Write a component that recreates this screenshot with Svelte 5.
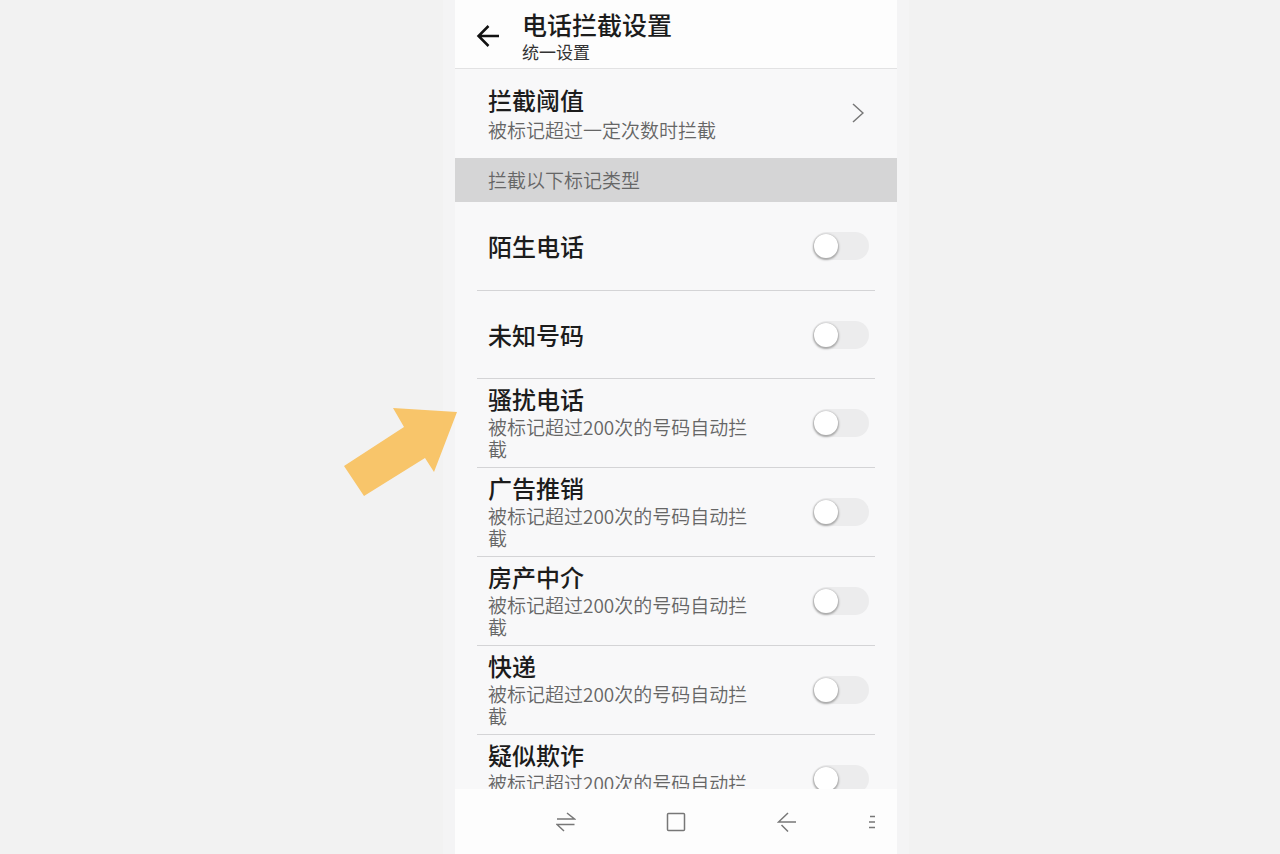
<script lang="ts">
	interface BlockType {
		id: string;
		name: string;
		detail?: string;
		enabled: boolean;
	}

	const detail = '被标记超过200次的号码自动拦截';

	let types: BlockType[] = $state([
		{ id: 'stranger', name: '陌生电话', enabled: false },
		{ id: 'unknown', name: '未知号码', enabled: false },
		{ id: 'harass', name: '骚扰电话', detail, enabled: false },
		{ id: 'ads', name: '广告推销', detail, enabled: false },
		{ id: 'estate', name: '房产中介', detail, enabled: false },
		{ id: 'courier', name: '快递', detail, enabled: false },
		{ id: 'fraud', name: '疑似欺诈', detail, enabled: false }
	]);
</script>

<div class="stage">
	<main class="phone">
		<header>
			<button class="back" aria-label="返回">
				<svg width="24" height="24" viewBox="0 0 24 24">
					<path d="M23 12H2.5M12.5 2L2.5 12l10 10" />
				</svg>
			</button>
			<div>
				<h1>电话拦截设置</h1>
				<p class="subtitle">统一设置</p>
			</div>
		</header>

		<div class="content">
			<button class="threshold">
				<span class="text">
					<span class="name">拦截阈值</span>
					<span class="detail">被标记超过一定次数时拦截</span>
				</span>
				<svg width="12" height="20" viewBox="0 0 12 20">
					<path d="M1 1l10 9-10 9" />
				</svg>
			</button>

			<h2>拦截以下标记类型</h2>

			<ul>
				{#each types as type (type.id)}
					<li class:detailed={type.detail}>
						<label for={type.id} class="text">
							<span class="name">{type.name}</span>
							{#if type.detail}<span class="detail">{type.detail}</span>{/if}
						</label>
						<input id={type.id} type="checkbox" role="switch" bind:checked={type.enabled} />
					</li>
				{/each}
			</ul>
		</div>

		<nav>
			<button aria-label="切换">
				<svg width="20" height="20" viewBox="0 0 20 20">
					<path d="M1 7h17.500L11 1M18.500 12.500H1l7 6.500" />
				</svg>
			</button>
			<button aria-label="主页">
				<svg width="20" height="20" viewBox="0 0 20 20">
					<rect x="1.500" y="1.500" width="17" height="17" rx="1" />
				</svg>
			</button>
			<button aria-label="后退">
				<svg width="20" height="20" viewBox="0 0 20 20">
					<path d="M19 10H1.500L11 1M4.500 13l6.500 6.500" />
				</svg>
			</button>
			<button class="more" aria-label="菜单">
				<svg width="8" height="20" viewBox="0 0 8 20">
					<path d="M2 4.500h5M1 10h6M1 15.500h6" />
				</svg>
			</button>
		</nav>

		<!-- Pointer towards the nuisance call entry -->
		<svg class="pointer" width="114" height="90" viewBox="0 0 114 90" aria-hidden="true">
			<path d="M49 0l64 4-23 60-9-14-61 38L0 58l60-39z" />
		</svg>
	</main>
</div>

<style>
	:global(body) {
		margin: 0;
		background: #f2f2f2;
	}
	.stage {
		display: grid;
		grid-template-columns: 455fr minmax(360px, 442fr) 383fr;
		font-family: 'Noto Sans CJK SC', sans-serif;
		color: #1c1c1c;
	}
	.phone {
		grid-column: 2;
		position: relative;
		display: flex;
		flex-direction: column;
		height: 100vh;
		background: #f8f8f9;
		box-shadow: 0 0 0 12px #f4f4f5;
	}
	button {
		border: none;
		padding: 0;
		background: none;
		font: inherit;
		color: inherit;
		text-align: left;
		cursor: pointer;
	}
	svg {
		display: block;
		fill: none;
		stroke: #777;
		stroke-width: 1.5;
	}
	header {
		display: flex;
		align-items: center;
		gap: 22px;
		box-sizing: border-box;
		height: 69px;
		padding: 4px 21px 0;
		background: #fdfdfd;
		border-bottom: 1px solid #e2e2e3;
	}
	.back svg {
		stroke: #111;
		stroke-width: 2.5;
	}
	h1 {
		margin: 0;
		font-size: 25px;
		font-weight: 500;
		line-height: 32px;
	}
	.subtitle {
		margin: 0;
		font-size: 17px;
		line-height: 24px;
		color: #333;
	}
	.content {
		flex: 1;
		min-height: 0;
		overflow: hidden;
	}
	.threshold {
		display: flex;
		align-items: center;
		justify-content: space-between;
		width: 100%;
		min-height: 89px;
		padding: 0 33px 2px;
	}
	.name,
	.detail {
		display: block;
	}
	.name {
		font-size: 24px;
		font-weight: 500;
		line-height: 34px;
	}
	.detail {
		font-size: 19px;
		font-weight: 350;
		line-height: 22px;
		color: #666;
	}
	.threshold .detail {
		line-height: 26px;
	}
	h2 {
		margin: 0;
		padding: 0 33px;
		background: #d5d5d6;
		font-size: 19px;
		font-weight: 350;
		line-height: 44px;
		color: #666;
	}
	ul {
		margin: 0 22px;
		padding: 0;
		list-style: none;
	}
	li {
		display: flex;
		align-items: center;
		justify-content: space-between;
		gap: 50px;
		box-sizing: border-box;
		min-height: 88px;
		padding: 3px 6px 3px 11px;
	}
	li + li {
		border-top: 1px solid #d4d4d6;
	}
	.detailed .text {
		padding-bottom: 4px;
	}
	input {
		flex: none;
		appearance: none;
		width: 56px;
		height: 28px;
		margin: 0;
		border-radius: 14px;
		background: #ececed;
		cursor: pointer;
	}
	input::before {
		content: '';
		display: block;
		width: 24px;
		height: 24px;
		margin: 2px 1px;
		border-radius: 50%;
		background: #fff;
		box-shadow: 0 1px 2px 1px #a8a8a8;
	}
	input:checked {
		background: #7cc5f5;
	}
	input:checked::before {
		margin-left: 31px;
	}
	nav {
		display: grid;
		grid-template-columns: 1fr 2fr 2fr 2fr 1fr;
		height: 65px;
		background: #fdfdfd;
	}
	nav button {
		display: flex;
		align-items: center;
		justify-content: center;
	}
	nav button:first-child {
		grid-column: 2;
	}
	nav .more {
		justify-content: flex-end;
		padding-right: 21px;
	}
	.pointer {
		position: absolute;
		top: 408px;
		left: -111px;
	}
	.pointer path {
		fill: #f8c56a;
		stroke: none;
	}
</style>
